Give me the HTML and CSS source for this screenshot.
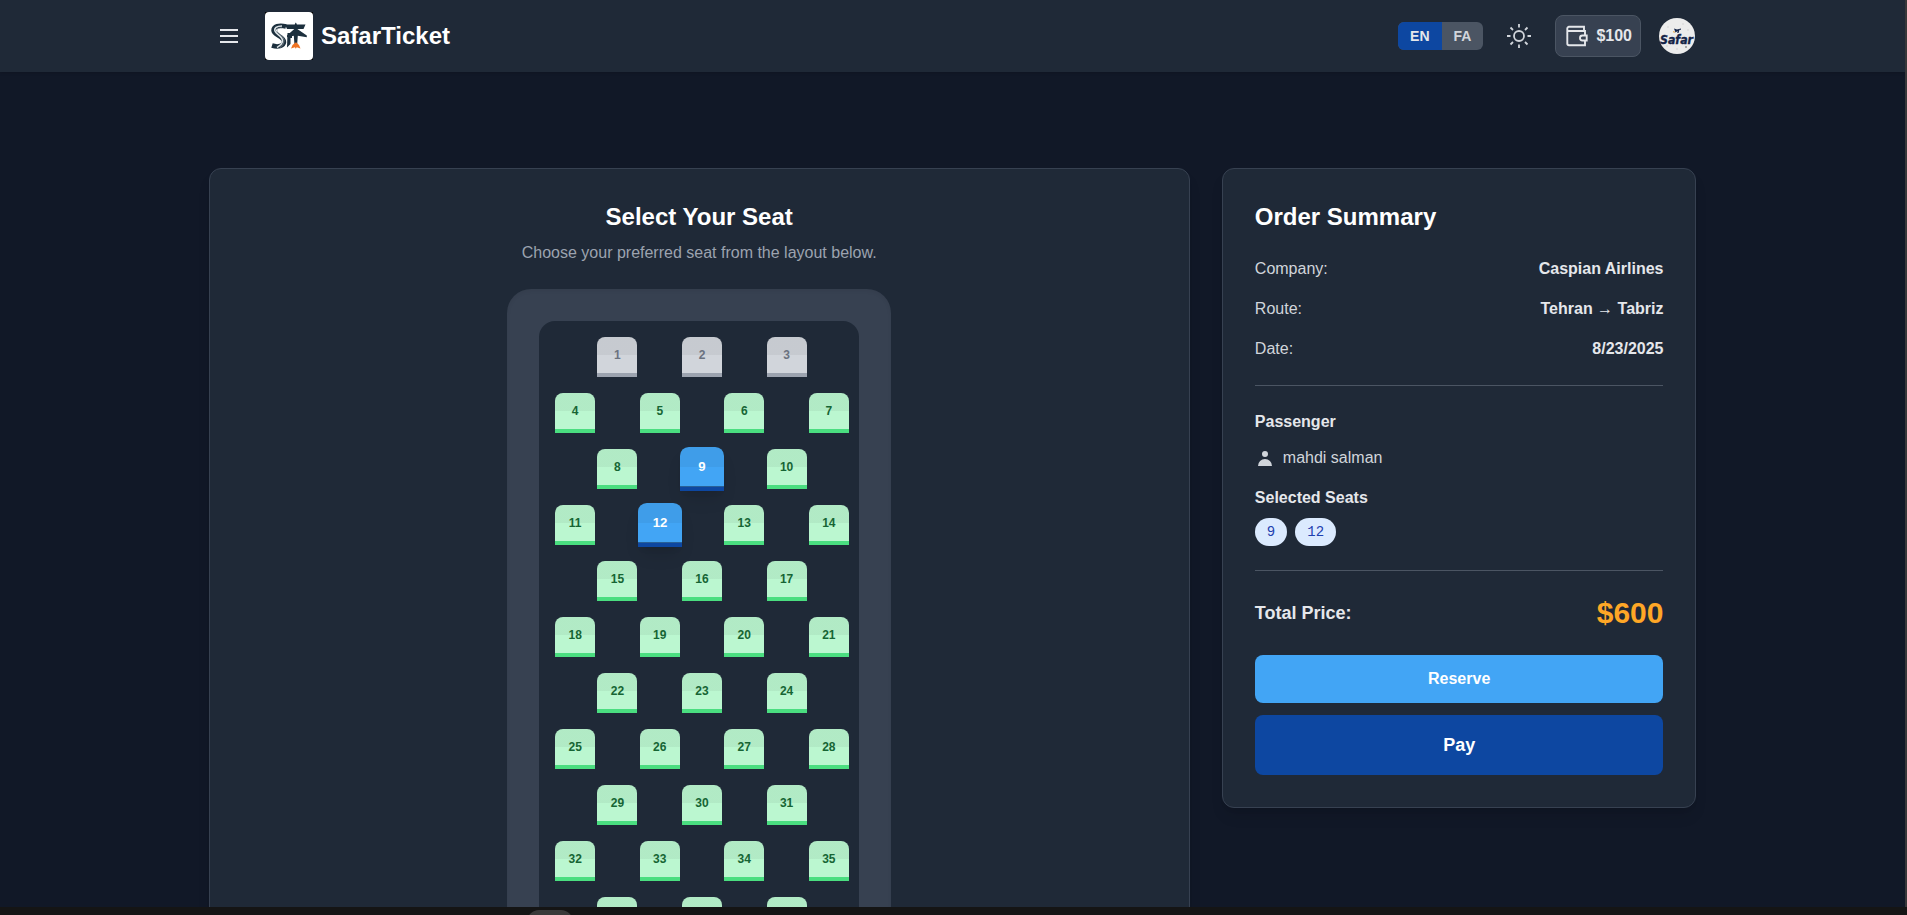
FILE: index.html
```html
<!DOCTYPE html>
<html lang="en">
<head>
<meta charset="utf-8">
<title>SafarTicket</title>
<link rel="stylesheet" href="styles.css">
</head>
<body>
<div class="page">
  <header class="header">
    <div class="bar">
      <div class="brand">
        <svg class="menu" viewBox="0 0 24 24" width="24" height="24"><path d="M3 6h18M3 12h18M3 18h18"/></svg>
        <svg class="logo" viewBox="0 0 48 48" width="48" height="48">
          <rect width="48" height="48" rx="4" fill="#fff"/>
          <path d="M21 14.500C14 12.500 8.500 14.500 8.500 18.500c0 4.500 11 6 10.500 11.500-.4 4-6 5.500-12 3.500" fill="none" stroke="#1c2f3d" stroke-width="4.500"/>
          <path d="M17 14C11.500 14 9 16 10 19c1.300 3.500 8 5.500 7.500 10-.3 3.500-3 5-5.500 6.500" fill="none" stroke="#dce2e5" stroke-width="1.600"/>
          <path d="M17 16C13 16 11.500 17 12.500 19.500c1.500 3 7 5 6.500 9.500-.4 3.500-2 5-4 6.500" fill="none" stroke="#8c989f" stroke-width=".7"/>
          <path d="M20 12.500h20.500L38.500 17H22zM22.500 21H27v5h-1.500v6L22 35.500z" fill="#1c2f3d"/>
          <path d="M30.800 10.500q1.500 1.500 1.500 6.500l9.500 6.500v1.800l-9-1.600-.7 9.300h-2.600l-.7-9.300-6.800 1.600v-1.800l7.300-6.500q0-5 1.500-6.500z" fill="#1c2f3d"/>
          <path d="M26 36.500l1.500-3.500 3-2.500h1l2.500 2.500 1.500 3.500-3.800-1.300-.9 1.500-.9-1.500z" fill="#ef7424"/>
        </svg>
        <span class="name">SafarTicket</span>
      </div>
      <div class="tools">
        <div class="lang"><span class="on">EN</span><span>FA</span></div>
        <svg class="sun" viewBox="0 0 24 24" width="24" height="24"><circle cx="12" cy="12" r="5"/><path d="M12 0v3.500M12 20.500V24M0 12h3.500M20.500 12H24M3.500 3.500L6 6M18 18l2.500 2.500M3.500 20.500L6 18M18 6l2.500-2.500"/></svg>
        <div class="wallet">
          <svg viewBox="0 0 24 24" width="24" height="24"><path d="M19 7V2.800H4a1.700 1.700 0 0 0-1.700 1.700V19.500A1.700 1.700 0 0 0 4 21.200H20V16.500M2.500 7H20v4M21.700 11.500H17.500a2.500 2.500 0 0 0 0 5h4.200z"/></svg>
          <span>$100</span>
        </div>
        <svg class="avatar" viewBox="0 0 36 36" width="36" height="36">
          <circle cx="18" cy="18" r="18" fill="#ececec"/>
          <g fill="#c9c9c9"><circle cx="9" cy="9" r=".7"/><circle cx="24" cy="6" r=".7"/><circle cx="29" cy="12" r=".7"/><circle cx="8" cy="28" r=".7"/><circle cx="18" cy="31" r=".7"/></g>
          <circle cx="27" cy="29" r=".8" fill="#555"/>
          <path d="M15 10.500l3 1 4-1v1.300h-1.500L19.500 15h-1.300l.5-2-2.200 1.500z" fill="#142347"/>
          <path d="M14 13.700l2 .5" stroke="#e8a030"/>
          <text x="17.500" y="25.500" text-anchor="middle" textLength="33" lengthAdjust="spacingAndGlyphs">Safar</text>
        </svg>
      </div>
    </div>
  </header>
  <main class="content">
    <section class="panel seats-panel">
      <h1>Select Your Seat</h1>
      <p class="sub">Choose your preferred seat from the layout below.</p>
      <div class="fuselage"><div class="cabin" id="cabin"></div></div>
    </section>
    <aside class="panel summary">
      <h2>Order Summary</h2>
      <dl>
        <div><dt>Company:</dt><dd>Caspian Airlines</dd></div>
        <div><dt>Route:</dt><dd>Tehran → Tabriz</dd></div>
        <div><dt>Date:</dt><dd>8/23/2025</dd></div>
      </dl>
      <div class="people">
        <h3>Passenger</h3>
        <p class="person"><svg viewBox="0 0 20 20" width="20" height="20"><path d="M10 9a3 3 0 1 0 0-6 3 3 0 0 0 0 6zM3 18a7 7 0 0 1 14 0z"/></svg>mahdi salman</p>
        <h3>Selected Seats</h3>
        <div class="chips"><span>9</span><span>12</span></div>
      </div>
      <div class="total"><span>Total Price:</span><strong>$600</strong></div>
      <button class="reserve">Reserve</button>
      <button class="pay">Pay</button>
    </aside>
  </main>
</div>
<div class="edge"></div>
<footer class="dock"><span></span></footer>
<script src="seats.js"></script>
</body>
</html>
```
FILE: styles.css
```css
* { box-sizing: border-box; margin: 0; }
body {
  display: grid;
  grid-template: 907px 8px / 1905px 2px;
  height: 915px;
  overflow: hidden;
  background: #151515;
  color: #e5e7eb;
  font: 16px/24px "Liberation Sans", Arial, sans-serif;
}
.page { overflow: hidden; background: #111827; }
.edge { background: #38383a; }
.dock { grid-column: 1 / 3; overflow: hidden; padding: 3px 0 0 527px; }
.dock span { display: block; width: 46px; height: 24px; border-radius: 14px; background: #3a3a3a; }

.header { height: 72px; background: #1f2937; box-shadow: 0 1px 3px rgba(0, 0, 0, .15); }
.bar {
  display: flex;
  align-items: center;
  justify-content: space-between;
  max-width: 1536px;
  height: 72px;
  margin: 0 auto;
  padding: 0 25.500px 0 24.500px;
}
.brand, .tools { display: flex; align-items: center; }
.menu { margin: 0 24px 0 8px; fill: none; stroke: #e5e7eb; stroke-width: 2; }
.logo { background: #000; }
.name { margin-left: 8px; color: #fff; font-size: 24px; font-weight: 700; line-height: 32px; }
.lang {
  display: flex;
  overflow: hidden;
  border-radius: 6px;
  background: #4b5563;
  color: #d1d5db;
  font-size: 14px;
  font-weight: 700;
  line-height: 20px;
}
.lang span { padding: 4px 12px; }
.lang .on { background: #0d47a1; color: #e5e7eb; }
.sun { margin: 0 24px; fill: none; stroke: #d1d5db; stroke-width: 1.800; }
.wallet {
  display: flex;
  align-items: center;
  gap: 7px;
  height: 42px;
  padding: 0 8px 0 9px;
  border: 1px solid #4b5563;
  border-radius: 8px;
  background: #374151;
  font-weight: 700;
}
.wallet svg { fill: none; stroke: #e5e7eb; stroke-width: 1.900; }
.avatar { margin-left: 18px; overflow: visible; }
.avatar text { fill: #142347; stroke: #142347; stroke-width: .4; font: italic 700 12.500px "DejaVu Sans", sans-serif; }

.content {
  display: grid;
  grid-template-columns: 981.33px 474.67px;
  gap: 32px;
  align-items: start;
  max-width: 1536px;
  margin: 96px auto 0;
  padding: 0 24px;
}
.panel {
  padding: 32px;
  border: 1px solid #374151;
  border-radius: 12px;
  background: #1f2937;
  box-shadow: 0 10px 15px -3px rgba(0, 0, 0, .1), 0 4px 6px -4px rgba(0, 0, 0, .1);
}
h1, h2 { color: #fff; font-size: 24px; line-height: 32px; }
.seats-panel { text-align: center; }
.sub { margin: 8px 0 24px; color: #9ca3af; }
.fuselage {
  width: 384px;
  margin: 0 auto;
  padding: 32px;
  border-radius: 24px;
  background: #374151;
  box-shadow: inset 0 2px 4px rgba(0, 0, 0, .06);
}
.cabin {
  display: grid;
  grid-template-columns: repeat(7, minmax(0, 1fr));
  gap: 16px 8px;
  padding: 16px;
  border-radius: 16px;
  background: #1f2937;
}
.seat {
  width: 40px;
  height: 40px;
  border-bottom: 4px solid #4ade80;
  border-radius: 8px 8px 0 0;
  background: linear-gradient(rgba(0, 0, 0, .05) 50%, transparent 50%) padding-box #bbf7d0;
  color: #166534;
  font-size: 12px;
  font-weight: 700;
  line-height: 36px;
}
.seat.taken { border-color: #9ca3af; background-color: #d1d5db; color: #6b7280; }
.seat.picked {
  border-color: #0d47a1;
  background-color: #42a5f5;
  color: #fff;
  transform: scale(1.1);
  box-shadow: 0 10px 15px -3px rgba(0, 0, 0, .1), 0 4px 6px -4px rgba(0, 0, 0, .1);
}

h2 { margin-bottom: 24px; }
h3 { font-size: 16px; line-height: 24px; }
dl { display: grid; gap: 16px; padding-bottom: 24px; border-bottom: 1px solid #4b5563; }
dl div { display: flex; justify-content: space-between; }
dt { color: #d1d5db; }
dd { font-weight: 700; }
.people { padding: 24px 0; border-bottom: 1px solid #4b5563; }
.person { display: flex; align-items: center; gap: 8px; margin: 12px 0 16px; color: #d1d5db; }
.person svg { fill: #d1d5db; }
.chips { display: flex; gap: 8px; margin-top: 8px; }
.chips span {
  padding: 4px 12px;
  border-radius: 14px;
  background: #dbeafe;
  color: #1e40af;
  font: 14px/20px "Liberation Mono", monospace;
}
.total { display: flex; align-items: center; justify-content: space-between; margin: 24px 0; font-size: 18px; font-weight: 700; }
.total strong { color: #ffa726; font-size: 30px; line-height: 36px; }
button {
  display: block;
  width: 100%;
  border: 0;
  border-radius: 8px;
  color: #fff;
  font: 700 16px/24px "Liberation Sans", Arial, sans-serif;
}
.reserve { height: 48px; background: #42a5f5; }
.pay { height: 60px; margin-top: 12px; background: #0d47a1; font-size: 18px; }
```
FILE: seats.js
```js
const cabin = document.getElementById('cabin');
const taken = [1, 2, 3];
const picked = [9, 12];
let number = 1;
for (let row = 0; row < 12; row++) {
  const columns = row % 2 ? [1, 3, 5, 7] : [2, 4, 6];
  for (const column of columns) {
    const seat = document.createElement('div');
    seat.className = 'seat' + (taken.includes(number) ? ' taken' : picked.includes(number) ? ' picked' : '');
    seat.style.gridColumn = column;
    seat.style.gridRow = row + 1;
    seat.textContent = number++;
    cabin.append(seat);
  }
}
```
